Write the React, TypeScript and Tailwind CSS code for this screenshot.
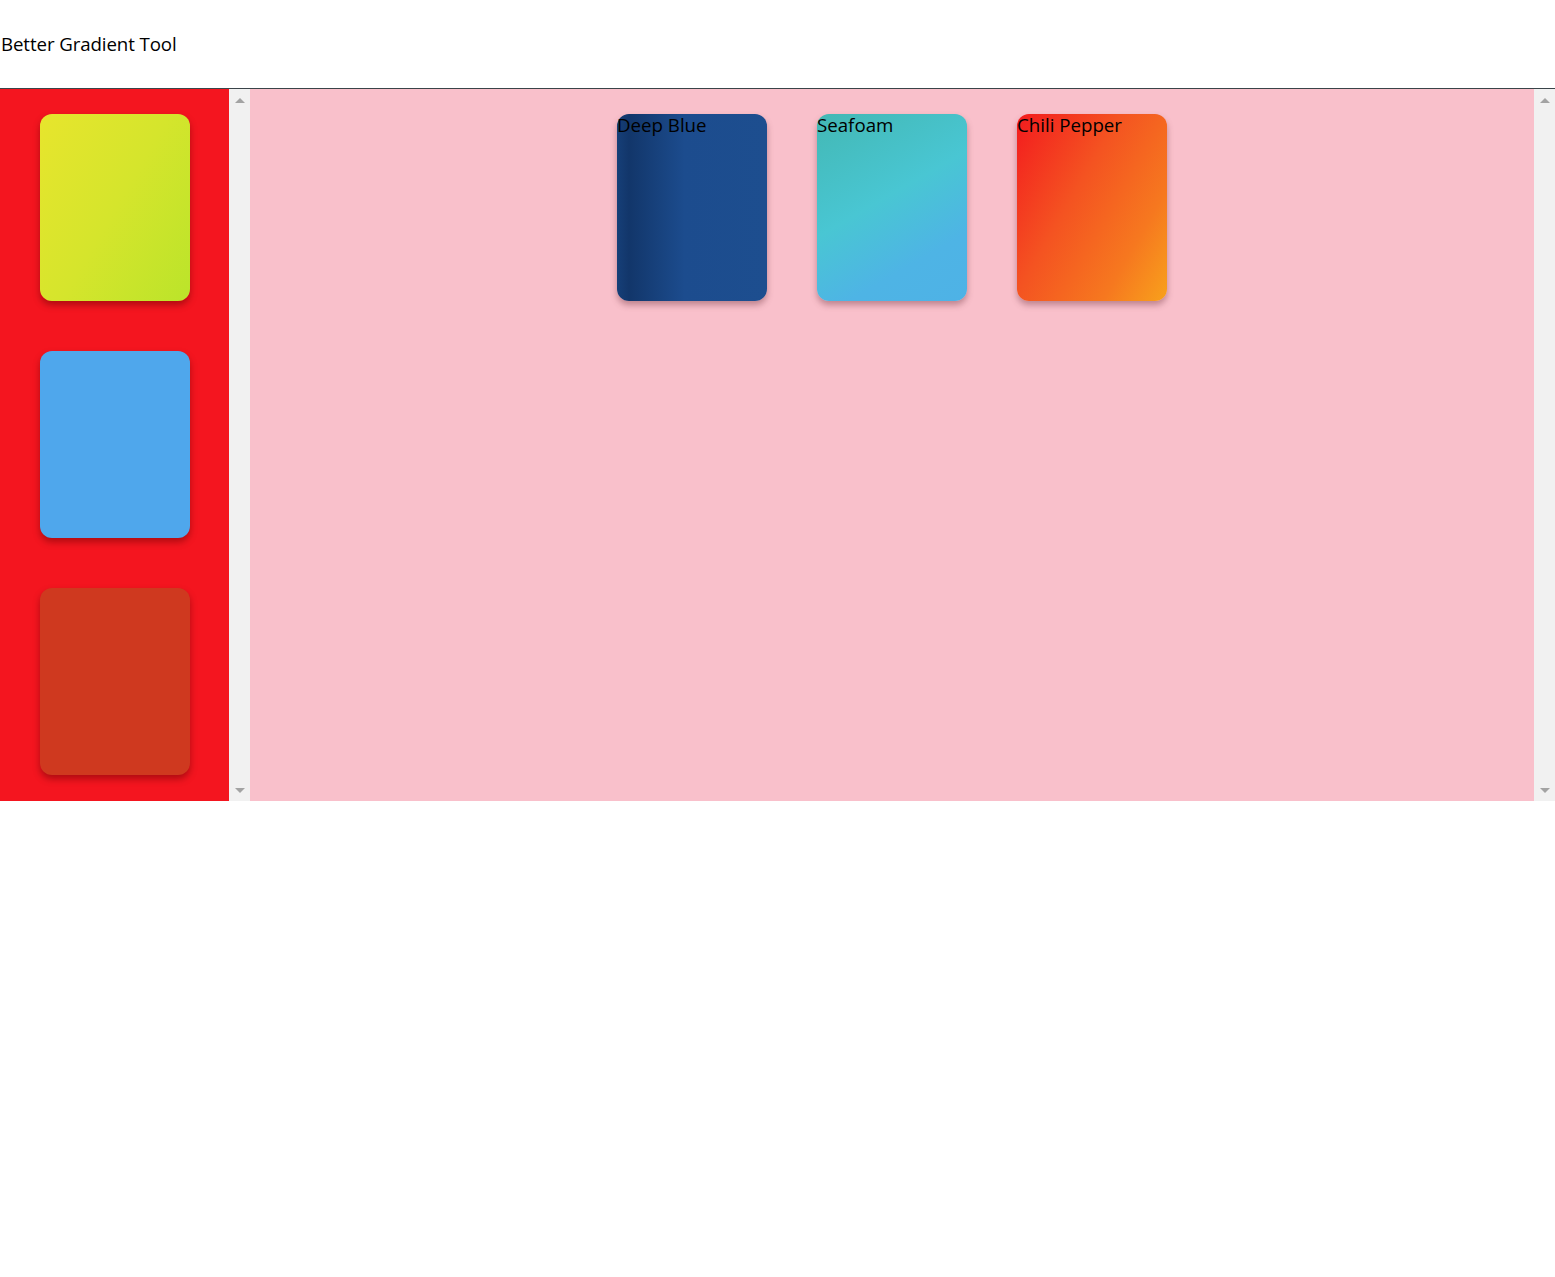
import React from "react";

function ScrollTrack() {
  return (
    <div className="w-[21px] shrink-0 bg-[#f1f1f1] flex flex-col items-center justify-between pt-[9px] pb-[8px]">
      <div className="w-0 h-0 border-l-[5px] border-r-[5px] border-b-[5px] border-l-transparent border-r-transparent border-b-[#a3a3a3]" />
      <div className="w-0 h-0 border-l-[5px] border-r-[5px] border-t-[5px] border-l-transparent border-r-transparent border-t-[#a3a3a3]" />
    </div>
  );
}

const font = { fontFamily: '"Segoe UI", "Open Sans", "Noto Sans", sans-serif' };

export default function App() {
  return (
    <div className="w-[1555px] bg-white text-black" style={font}>
      <header className="h-[89px] border-b border-[#3a4449] flex items-center pl-[1px]">
        <span className="text-[18.7px] leading-none tracking-[-0.1px]">Better Gradient Tool</span>
      </header>
      <div className="flex h-[712px]">
        <aside className="w-[229px] shrink-0 bg-[#f4151f] flex flex-col items-center gap-[50px] pt-[25px]">
          <div className="w-[150px] h-[187px] rounded-[12px] bg-[linear-gradient(120deg,#e7e52d_0%,#d5e52c_50%,#bbe42a_100%)] shadow-[0_4px_7px_rgba(90,0,0,0.45)]" />
          <div className="w-[150px] h-[187px] rounded-[12px] bg-[#4fa7ec] shadow-[0_4px_7px_rgba(90,0,0,0.45)]" />
          <div className="w-[150px] h-[187px] rounded-[12px] bg-[#cf391f] shadow-[0_4px_7px_rgba(90,0,0,0.45)]" />
        </aside>
        <ScrollTrack />
        <main className="flex-1 bg-[#f9c0cb] flex justify-center items-start gap-[50px] pt-[25px]">
          <div className="w-[150px] h-[187px] rounded-[12px] bg-[linear-gradient(90deg,#163f78_0%,#12366a_8%,#1c4c8e_45%,#1d4e8f_100%)] shadow-[0_4px_6px_rgba(120,60,70,0.45)]">
            <div className="text-[18.7px] leading-[22px]">Deep Blue</div>
          </div>
          <div className="w-[150px] h-[187px] rounded-[12px] bg-[linear-gradient(150deg,#43b8b4_0%,#49c6d3_45%,#4eb4e5_75%,#4eb2e6_100%)] shadow-[0_4px_6px_rgba(120,60,70,0.45)]">
            <div className="text-[18.7px] leading-[22px]">Seafoam</div>
          </div>
          <div className="w-[150px] h-[187px] rounded-[12px] bg-[linear-gradient(120deg,#f31b1e_0%,#f45321_40%,#f6781f_75%,#f8a11c_100%)] shadow-[0_4px_6px_rgba(120,60,70,0.45)]">
            <div className="text-[18.7px] leading-[22px]">Chili Pepper</div>
          </div>
        </main>
        <ScrollTrack />
      </div>
    </div>
  );
}
